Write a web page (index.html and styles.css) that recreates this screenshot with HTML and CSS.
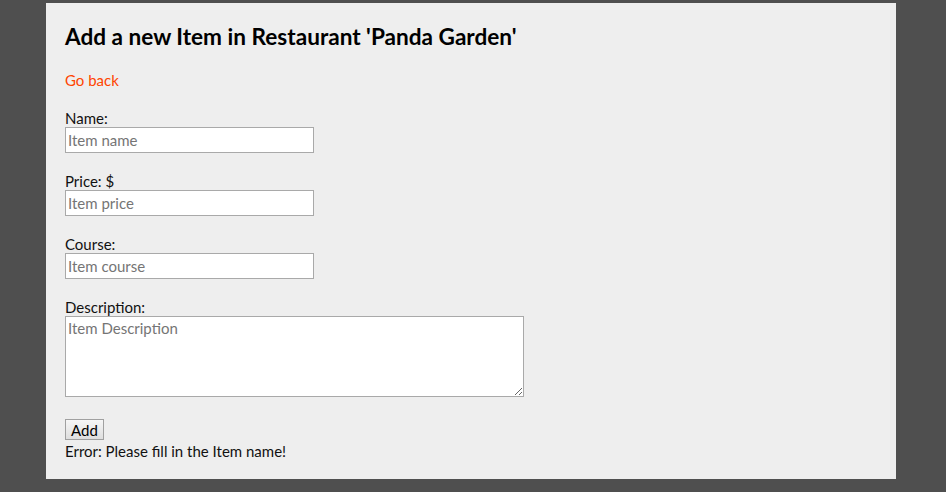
FILE: index.html
```html
<!DOCTYPE html>
<html>
<head>
<meta charset="utf-8">
<link rel="stylesheet" href="styles.css">
</head>
<body>
<div class="page">
  <h2 class="title">Add a new Item in Restaurant 'Panda Garden'</h2>
  <a class="back" href="#">Go back</a>
  <form class="form">
    <div class="field">
      <label class="label">Name:</label>
      <input class="input" type="text" placeholder="Item name">
    </div>
    <div class="field">
      <label class="label">Price: $</label>
      <input class="input" type="text" placeholder="Item price">
    </div>
    <div class="field">
      <label class="label">Course:</label>
      <input class="input" type="text" placeholder="Item course">
    </div>
    <div class="field">
      <label class="label">Description:</label>
      <textarea class="textarea" placeholder="Item Description"></textarea>
    </div>
    <div class="actions">
      <button class="button" type="button">Add</button>
      <div class="error">Error: Please fill in the Item name!</div>
    </div>
  </form>
</div>
</body>
</html>
```
FILE: styles.css
```css
html, body {
  margin: 0;
  padding: 0;
  background: #4f4f4f;
  height: 100%;
}
body {
  font-family: Lato, "Open Sans", sans-serif;
  font-size: 15px;
  color: #111;
}
.page {
  width: 831px;
  margin: 3px 0 0 46px;
  padding: 20px 0 20px 19px;
  background: #eeeeee;
  height: 436px;
}
.title {
  margin: 0;
  font-size: 22.6px;
  line-height: 28px;
  font-weight: bold;
  color: #000;
}
.back {
  display: block;
  margin-top: 20px;
  color: #ff4500;
  text-decoration: none;
  line-height: 18px;
}
.form {
  display: flex;
  flex-direction: column;
  margin-top: 20px;
}
.field {
  display: flex;
  flex-direction: column;
  align-items: flex-start;
  margin-bottom: 19px;
}
.label {
  line-height: 18px;
}
.input {
  width: 249px;
  height: 26px;
  box-sizing: border-box;
  border: 1px solid #a9a9a9;
  padding: 1px 2px;
  font-family: inherit;
  font-size: 15px;
  background: #fff;
  margin: 0;
}
.textarea {
  width: 459px;
  height: 81px;
  box-sizing: border-box;
  border: 1px solid #a9a9a9;
  padding: 2px 2px;
  font-family: inherit;
  font-size: 15px;
  background: #fff;
  margin: 0;
}
.input::placeholder, .textarea::placeholder {
  color: #757575;
}
.actions {
  display: flex;
  flex-direction: column;
  align-items: flex-start;
  margin-top: 3px;
}
.button {
  height: 21px;
  width: 39px;
  padding: 0;
  font-family: inherit;
  font-size: 15px;
  color: #000;
  border: 1px solid #a0a0a0;
  background: linear-gradient(#f6f6f6, #dedede);
  margin: 0;
}
.error {
  margin-top: 2px;
  line-height: 18px;
}
```
